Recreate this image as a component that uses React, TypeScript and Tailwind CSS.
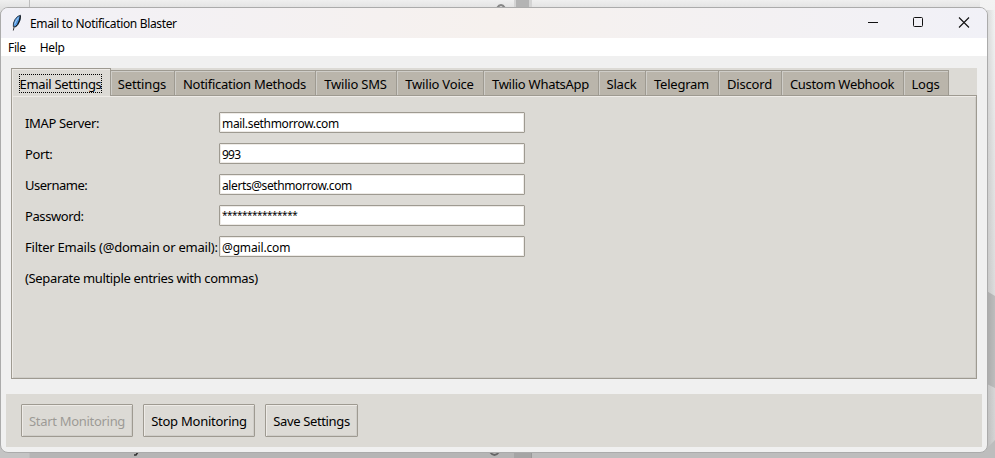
import React from "react";

const tabs = [
  { label: "Settings", box: "w-[64px]", text: "tracking-[-0.15px]" },
  { label: "Notification Methods", box: "w-[141px]", text: "tracking-[-0.27px]" },
  { label: "Twilio SMS", box: "w-[81px]", text: "tracking-[-0.2px]" },
  { label: "Twilio Voice", box: "w-[87px]", text: "tracking-[-0.2px]" },
  { label: "Twilio WhatsApp", box: "w-[115px]", text: "tracking-[-0.27px]" },
  { label: "Slack", box: "w-[47px]", text: "tracking-[-0.2px]" },
  { label: "Telegram", box: "w-[73px]", text: "tracking-[-0.22px]" },
  { label: "Discord", box: "w-[63px]", text: "tracking-[-0.2px]" },
  { label: "Custom Webhook", box: "w-[122px]", text: "tracking-[-0.3px]" },
  { label: "Logs", box: "w-[45px]", text: "tracking-[-0.25px]" },
];

const fields = [
  { label: "IMAP Server:", value: "mail.sethmorrow.com", l: "tracking-[-0.35px]", v: "tracking-[-0.33px]" },
  { label: "Port:", value: "993", l: "tracking-[-0.4px]", v: "tracking-[-0.8px]" },
  { label: "Username:", value: "alerts@sethmorrow.com", l: "tracking-[-0.5px]", v: "tracking-[-0.4px]" },
  { label: "Password:", value: "***************", l: "tracking-[-0.4px]", v: "text-[10px] tracking-[-0.5px] pb-[4px]" },
  { label: "Filter Emails (@domain or email):", value: "@gmail.com", l: "tracking-[-0.23px]", v: "tracking-[-0.15px]" },
];

const buttons = [
  { label: "Start Monitoring", box: "w-[112px] text-[#9c9a96]", text: "tracking-[-0.3px]" },
  { label: "Stop Monitoring", box: "w-[112px] text-black", text: "tracking-[-0.25px]" },
  { label: "Save Settings", box: "w-[93px] text-black", text: "tracking-[-0.35px]" },
];

function Feather() {
  return (
    <svg width="12" height="18" viewBox="0 0 12 18" className="shrink-0">
      <path d="M9.500 1.200 L6.500 2.500 L4 5.500 L2.500 9 L2.300 12.500 L4.500 13 L7 10.500 L8.300 8 L9.300 5.500 Z" fill="#4f94dc" stroke="#26303c" strokeWidth="0.900" />
      <path d="M7.500 3.500 L5 7 L3.600 10.500" fill="none" stroke="#a9d0f5" strokeWidth="1" />
      <path d="M9.300 2 L8.500 6 L6.500 10.500 L4.500 12.800" fill="none" stroke="#111" strokeWidth="1" />
      <path d="M3.200 12.500 L2.300 16.500" fill="none" stroke="#333" strokeWidth="1" />
    </svg>
  );
}

function Backdrop() {
  return (
    <svg width="995" height="458" className="absolute inset-0">
      <defs>
        <linearGradient id="top" x1="0" y1="0" x2="0" y2="1">
          <stop offset="0" stopColor="#efefef" />
          <stop offset="1" stopColor="#dcdcdc" />
        </linearGradient>
        <linearGradient id="side" x1="0" y1="0" x2="0" y2="1">
          <stop offset="0" stopColor="#f3f3f3" />
          <stop offset="0.3" stopColor="#e6e6e6" />
          <stop offset="1" stopColor="#d2d2d2" />
        </linearGradient>
        <linearGradient id="edge" x1="0" y1="0" x2="1" y2="0">
          <stop offset="0" stopColor="#000" stopOpacity="0.1" />
          <stop offset="1" stopColor="#000" stopOpacity="0" />
        </linearGradient>
      </defs>
      <rect width="995" height="12" fill="url(#top)" />
      <rect x="980" width="15" height="458" fill="url(#side)" />
      <path d="M985 290 L995 296 V388 L985 383 Z" fill="#bdbdbd" />
      <rect x="987" y="10" width="8" height="448" fill="url(#edge)" />
      <rect y="440" width="980" height="18" fill="#b5b5b5" />
      <rect y="440" width="29" height="18" fill="#c4c4c4" />
      <path d="M532 450 H985 L995 440 V458 H532 Z" fill="#bdbdbd" />
      <rect x="29" width="1" height="458" fill="#bdbdbd" />
      <rect x="514" width="18" height="8" fill="#d4d4d4" />
      <rect x="516" width="13" height="8" fill="#b4b4b4" />
      <rect x="514" y="450" width="17" height="8" fill="#a5a5a5" />
      <rect x="531" y="450" width="1" height="8" fill="#999" />
      <path d="M497 8 Q501 2 505 8" fill="none" stroke="#858585" strokeWidth="2" />
      <path d="M490 452 Q494.500 458 499 452" fill="none" stroke="#666" strokeWidth="2" />
      <path d="M138 452 L136 455 H134" fill="none" stroke="#333" strokeWidth="1.500" />
    </svg>
  );
}

export default function App() {
  return (
    <div className="relative h-[458px] w-[995px] overflow-hidden bg-[#c4c4c4] font-['Noto_Sans','Open_Sans',sans-serif] text-[13px] leading-[18px] text-black">
      <Backdrop />
      <div className="absolute top-[7px] left-0 flex h-[446px] w-[988px] flex-col overflow-hidden rounded-[8px] border border-[#ababab] bg-[#f0f0f0]">
        <header className="flex h-[30px] shrink-0 items-center bg-linear-to-r from-[#f2f1f7] via-[#f6f1ee] to-[#f1f1f7] pl-[10px]">
          <Feather />
          <h1 className="ml-[7px] pt-[2px] text-[12px] tracking-[-0.35px] whitespace-nowrap">Email to Notification Blaster</h1>
          <svg width="110" height="20" className="mr-[14px] ml-auto" fill="none" stroke="#111">
            <path d="M5 9.500 H15" />
            <rect x="50.500" y="4.500" width="9" height="9" rx="1" />
            <path d="M96 4.500 L106 14.500 M106 4.500 L96 14.500" strokeWidth="1.100" />
          </svg>
        </header>
        <nav className="flex h-[18px] shrink-0 items-center gap-[14px] bg-white pt-[2px] pl-[7px] text-[12px] tracking-[-0.35px]">
          <span>File</span>
          <span>Help</span>
        </nav>

        <section className="mt-[12px] ml-[10px] flex h-[311px] w-[966px] shrink-0 flex-col bg-[#dcdad5]">
          <div className="relative z-10 flex h-[28px] shrink-0 items-end">
            <div className="flex h-[28px] w-[100px] items-start border-t border-r border-l border-[#9e9a91] bg-[#dcdad5] pt-[5px] pl-[7px] whitespace-nowrap shadow-[inset_1px_1px_0_#eeebe7]">
              <span className="flex h-[19px] w-[83px] items-center justify-center border border-dotted border-black tracking-[-0.3px]">Email Settings</span>
            </div>
            {tabs.map((t) => (
              <div key={t.label} className={`${t.box} flex h-[26px] items-center justify-center border-t border-r border-b border-[#9e9a91] bg-[#bab5ab] pt-px pr-px whitespace-nowrap shadow-[inset_1px_1px_0_#cfcdc8]`}>
                <span className={t.text}>{t.label}</span>
              </div>
            ))}
            <div className="h-px flex-1 bg-[#9e9a91]" />
          </div>
          <div className="flex flex-1 flex-col border-r border-b border-l border-[#9e9a91] pt-[16px] pl-[13px] shadow-[inset_1px_1px_0_#eeebe7,inset_-1px_-1px_0_#cfcdc8]">
            {fields.map((f) => (
              <div key={f.label} className="mb-[10px] flex h-[21px] items-center whitespace-nowrap">
                <label className="w-[194px]"><span className={f.l}>{f.label}</span></label>
                <div className="flex h-[21px] w-[306px] items-center rounded-[1px] border border-[#9e9a91] bg-white pt-[2px] pl-[2px] text-[12px] shadow-[inset_0_0_0_1px_#eeebe7]">
                  <span className={f.v}>{f.value}</span>
                </div>
              </div>
            ))}
            <p className="pt-[2px] leading-[19px] tracking-[-0.35px]">(Separate multiple entries with commas)</p>
          </div>
        </section>

        <footer className="mt-[15px] ml-[5px] flex h-[53px] w-[976px] shrink-0 gap-[10px] bg-[#dcdad5] pt-[10px] pl-[15px]">
          {buttons.map((b) => (
            <button key={b.label} className={`${b.box} flex h-[33px] items-center justify-center rounded-[1px] border border-[#9e9a91] whitespace-nowrap shadow-[inset_1px_1px_0_#eeebe7,inset_-1px_-1px_0_#cfcdc8]`}>
              <span className={b.text}>{b.label}</span>
            </button>
          ))}
        </footer>
      </div>
    </div>
  );
}
